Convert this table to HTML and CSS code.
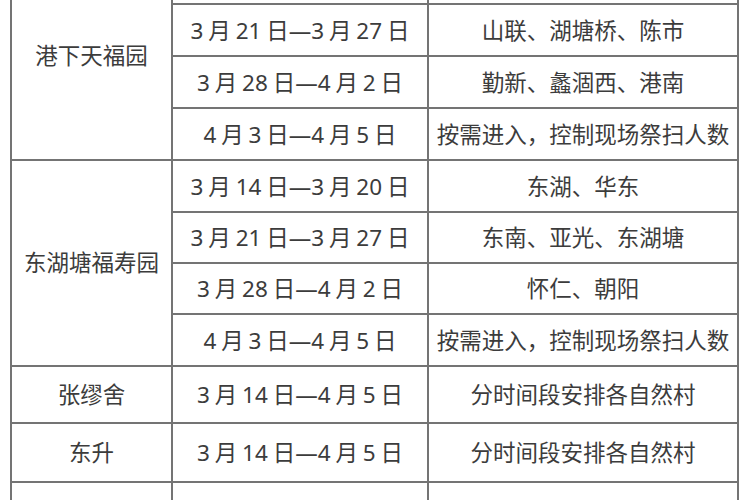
FILE: index.html
```html
<!DOCTYPE html>
<html lang="zh-CN">
<head>
<meta charset="utf-8">
<title>祭扫安排</title>
<link rel="stylesheet" href="styles.css">
</head>
<body>
<div class="sheet">
  <div class="cell name g1">港下天福园</div>
  <div class="cell date">3 月 14 日—3 月 20 日</div>
  <div class="cell area">港下、港城</div>
  <div class="cell date">3 月 21 日—3 月 27 日</div>
  <div class="cell area">山联、湖塘桥、陈市</div>
  <div class="cell date">3 月 28 日—4 月 2 日</div>
  <div class="cell area">勤新、蠡涸西、港南</div>
  <div class="cell date">4 月 3 日—4 月 5 日</div>
  <div class="cell area">按需进入，控制现场祭扫人数</div>

  <div class="cell name g2">东湖塘福寿园</div>
  <div class="cell date">3 月 14 日—3 月 20 日</div>
  <div class="cell area">东湖、华东</div>
  <div class="cell date">3 月 21 日—3 月 27 日</div>
  <div class="cell area">东南、亚光、东湖塘</div>
  <div class="cell date">3 月 28 日—4 月 2 日</div>
  <div class="cell area">怀仁、朝阳</div>
  <div class="cell date">4 月 3 日—4 月 5 日</div>
  <div class="cell area">按需进入，控制现场祭扫人数</div>

  <div class="cell name">张缪舍</div>
  <div class="cell date">3 月 14 日—4 月 5 日</div>
  <div class="cell area">分时间段安排各自然村</div>

  <div class="cell name">东升</div>
  <div class="cell date">3 月 14 日—4 月 5 日</div>
  <div class="cell area">分时间段安排各自然村</div>

  <div class="cell name">新南</div>
  <div class="cell date">3 月 14 日—4 月 5 日</div>
  <div class="cell area">分时间段安排各自然村</div>
</div>
</body>
</html>
```

FILE: styles.css
```css
html, body {
  margin: 0;
  padding: 0;
  background: #ffffff;
  overflow: hidden;
}

body {
  width: 750px;
  height: 500px;
  font-family: "Noto Sans", "Noto Sans CJK SC", sans-serif;
  color: #3c3c3c;
}

.sheet {
  display: grid;
  grid-template-columns: 161px 256px 310px;
  grid-template-rows: 52px 52px 52px 52px 52px 51px 51px 52px 57px 59px 59px;
  margin-left: 10px;
  margin-top: -49px;
  width: 729px;
  border-left: 2px solid #747474;
  border-top: 2px solid #747474;
}

.cell {
  box-sizing: border-box;
  border-right: 2px solid #747474;
  border-bottom: 2px solid #747474;
  display: flex;
  align-items: center;
  justify-content: center;
  font-size: 22.5px;
  line-height: 1;
  white-space: nowrap;
  padding-top: 2px;
}

.date {
  word-spacing: -1px;
}

.g1,
.g2 {
  grid-row: span 4;
  padding-top: 1px;
}
```
